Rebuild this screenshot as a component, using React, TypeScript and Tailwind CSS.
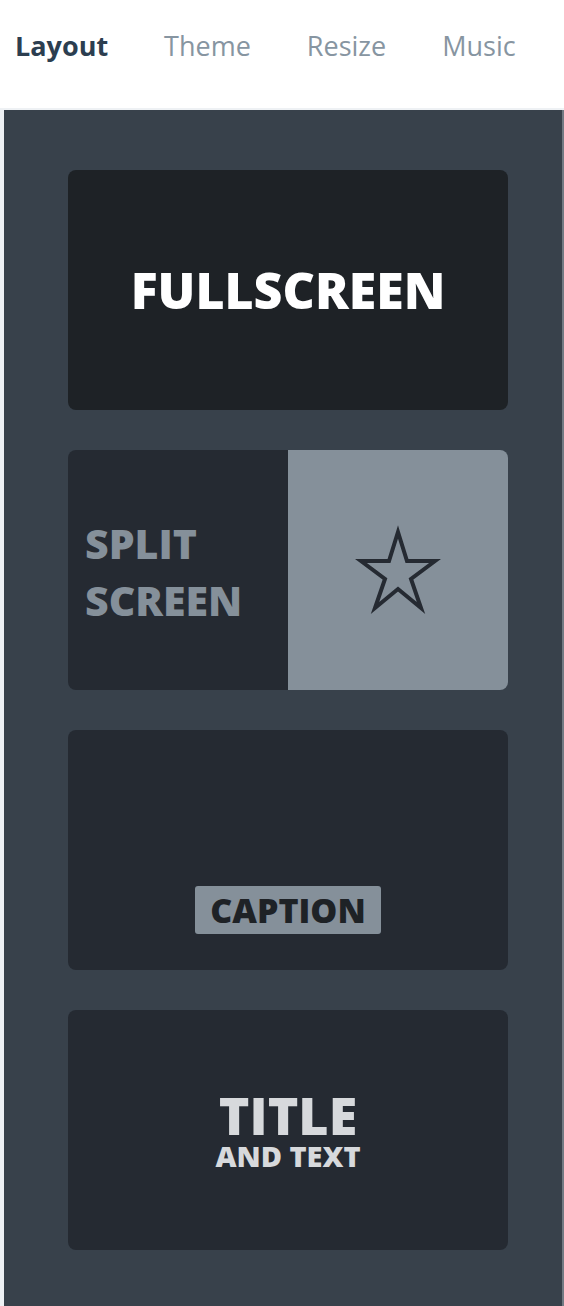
const tabs = ['Layout', 'Theme', 'Resize', 'Music'];

function StarIcon() {
  return (
    <svg width="96" height="96" viewBox="-48 -48 96 96" fill="none">
      <polygon
        points="0,-38 9,-9 37,-9 13,9 23,38 0,19 -23,38 -13,9 -37,-9 -9,-9"
        stroke="#252a32"
        strokeWidth="4"
        strokeLinejoin="miter"
        strokeMiterlimit="10"
      />
    </svg>
  );
}

export default function App() {
  return (
    <div className="min-h-[1306px] bg-[#eef1f4] font-['Open_Sans',sans-serif]">
      {/* Tabs */}
      <nav className="flex h-[110px] items-center gap-[56px] border-b-2 border-[#eef1f4] bg-white pb-4 pl-[15px]">
        {tabs.map((tab, i) => (
          <span
            key={tab}
            className={
              i === 0
                ? 'text-[27px] font-bold text-[#2c3e50]'
                : 'text-[27px] font-normal text-[#8795a1]'
            }
          >
            {tab}
          </span>
        ))}
      </nav>

      {/* Layout choices */}
      <div className="ml-1 flex w-[560px] flex-col gap-10 border-r-2 border-[#727a83] bg-[#38414b] pb-14 pl-16 pt-[60px]">
        <div className="flex h-[240px] w-[440px] items-center justify-center rounded-lg bg-[#1e2226]">
          <span className="text-[50px] font-extrabold leading-none text-white">FULLSCREEN</span>
        </div>

        <div className="flex h-[240px] w-[440px] overflow-hidden rounded-lg">
          <div className="flex w-[220px] flex-col justify-center bg-[#252a32] pl-[17px] pt-[4px]">
            <span className="text-[41px] font-extrabold leading-[57px] text-[#85909a]">SPLIT</span>
            <span className="text-[41px] font-extrabold leading-[57px] text-[#85909a]">SCREEN</span>
          </div>
          <div className="flex w-[220px] items-center justify-center bg-[#85909a]">
            <StarIcon />
          </div>
        </div>

        <div className="flex h-[240px] w-[440px] flex-col items-center justify-end rounded-lg bg-[#252a32] pb-9">
          <span className="rounded-[3px] bg-[#85909a] px-[15px] text-[34px] font-extrabold leading-[48px] text-[#1e2226]">
            CAPTION
          </span>
        </div>

        <div className="flex h-[240px] w-[440px] flex-col items-center justify-center rounded-lg bg-[#252a32] text-[#d7d9dc]">
          <span className="text-[52px] font-extrabold leading-[52px]">TITLE</span>
          <span className="text-[29px] font-extrabold leading-[30px]">AND TEXT</span>
        </div>
      </div>
    </div>
  );
}
